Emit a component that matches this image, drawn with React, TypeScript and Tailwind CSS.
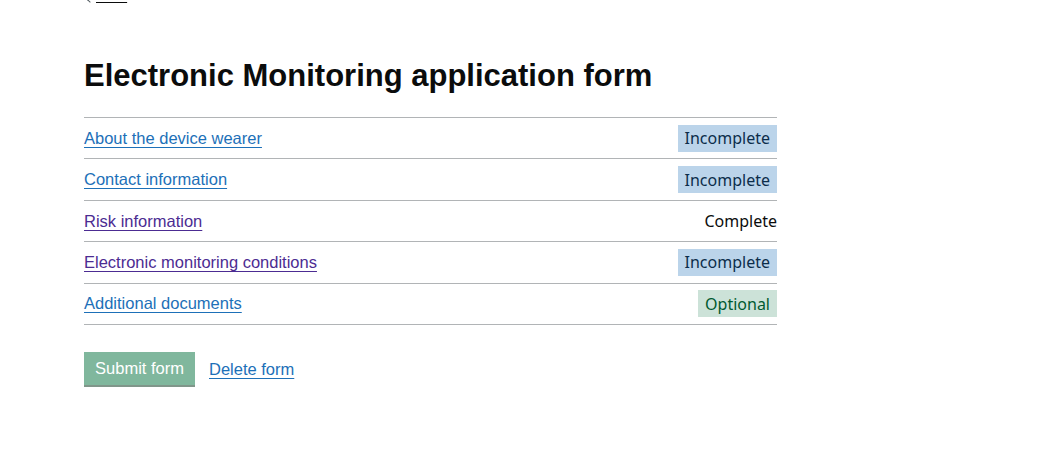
import React from 'react';

type Status = 'incomplete' | 'complete' | 'optional';

const tasks: { label: string; href: string; visited: boolean; status: Status }[] = [
  { label: 'About the device wearer', href: '#about', visited: false, status: 'incomplete' },
  { label: 'Contact information', href: '#contact', visited: false, status: 'incomplete' },
  { label: 'Risk information', href: '#risk', visited: true, status: 'complete' },
  { label: 'Electronic monitoring conditions', href: '#conditions', visited: true, status: 'incomplete' },
  { label: 'Additional documents', href: '#documents', visited: false, status: 'optional' },
];

const StatusTag = ({ status }: { status: Status }) => {
  if (status === 'complete') {
    return <span className="text-[16px] text-[#0b0c0c] font-['Noto_Sans',sans-serif]">Complete</span>;
  }
  if (status === 'optional') {
    return (
      <span className="bg-[#cce2d8] text-[#005a30] px-[7px] h-[27px] flex items-center text-[16px] font-['Noto_Sans',sans-serif]">
        Optional
      </span>
    );
  }
  return (
    <span className="bg-[#bbd4ea] text-[#0c2d4a] px-[7px] h-[27px] flex items-center text-[16px] font-['Noto_Sans',sans-serif]">
      Incomplete
    </span>
  );
};

const App = () => {
  return (
    <div className="min-h-screen bg-white text-[#0b0c0c] font-['Liberation_Sans',Arial,sans-serif]">
      <div className="pl-[84px] w-[777px]">
        {/* back link, mostly scrolled out of view */}
        <div className="-mt-[14px] flex items-center h-[18px]">
          <span className="ml-[4px] mr-[4px] w-[4px] h-[4px] border-l border-b border-[#505a5f] rotate-45 mt-[10px]" />
          <a href="#" className="text-[14px] leading-[16px] text-[#0b0c0c] underline underline-offset-[2px]">
            Back
          </a>
        </div>

        <h1 className="mt-[53px] text-[31px] leading-[37px] font-bold">Electronic Monitoring application form</h1>

        <ul className="mt-[23px] border-t border-[#b1b4b6]">
          {tasks.map((task) => (
            <li
              key={task.label}
              className="h-[41.4px] border-b border-[#b1b4b6] flex items-center justify-between"
            >
              <a
                href={task.href}
                className={`text-[16.5px] underline underline-offset-[3px] decoration-1 ${
                  task.visited ? 'text-[#4c2c92]' : 'text-[#1d70b8]'
                }`}
              >
                {task.label}
              </a>
              <StatusTag status={task.status} />
            </li>
          ))}
        </ul>

        <div className="mt-[27px] flex items-center gap-[14px]">
          <button
            disabled
            className="w-[111px] h-[33px] bg-[#80b79d] text-white text-[16.5px] shadow-[0_2px_0_#80968a] cursor-not-allowed"
          >
            Submit form
          </button>
          <a href="#" className="text-[16.5px] text-[#1d70b8] underline underline-offset-[3px] mt-[1px]">
            Delete form
          </a>
        </div>
      </div>
    </div>
  );
};

export default App;
